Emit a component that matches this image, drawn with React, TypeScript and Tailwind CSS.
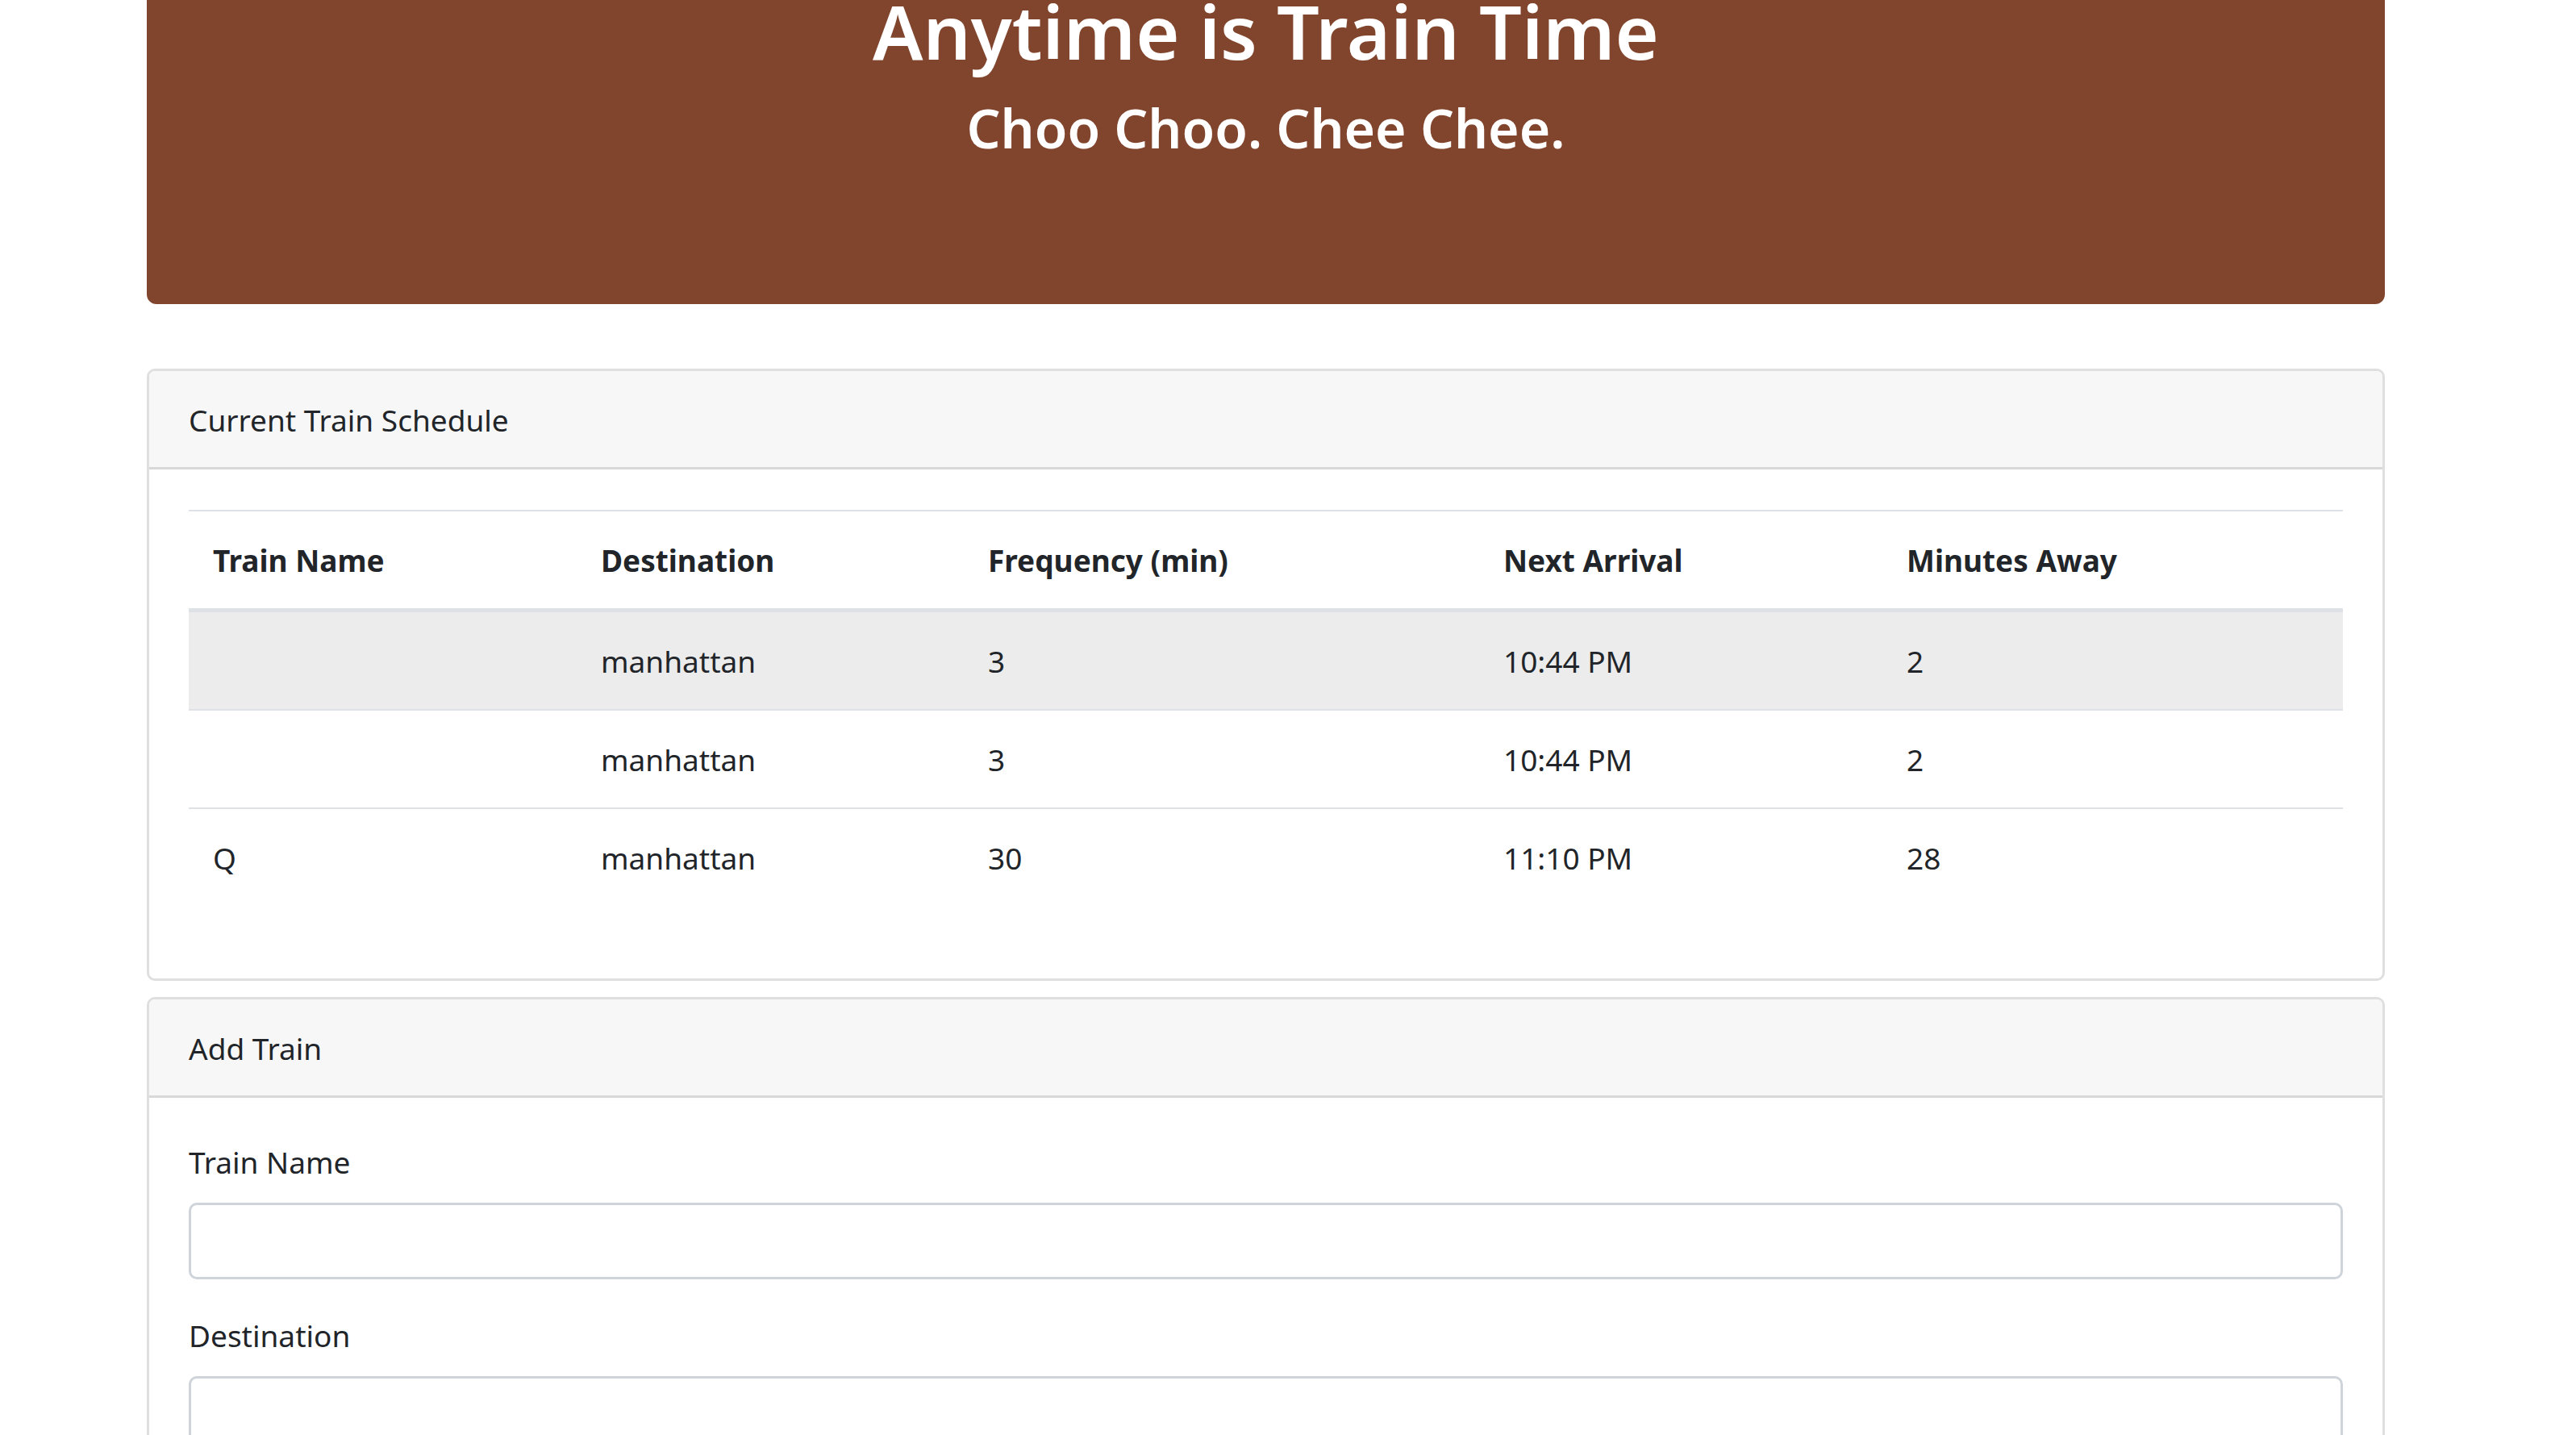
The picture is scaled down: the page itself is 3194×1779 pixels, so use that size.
import type { ReactNode } from 'react';

type Train = {
  name: string;
  destination: string;
  frequency: number;
  nextArrival: string;
  minutesAway: number;
};

const columns = [
  { label: 'Train Name', width: 'w-[481px]' },
  { label: 'Destination', width: 'w-[480px]' },
  { label: 'Frequency (min)', width: 'w-[639px]' },
  { label: 'Next Arrival', width: 'w-[500px]' },
  { label: 'Minutes Away', width: 'w-[571px]' },
];

const trains: Train[] = [
  { name: '', destination: 'manhattan', frequency: 3, nextArrival: '10:44 PM', minutesAway: 2 },
  { name: '', destination: 'manhattan', frequency: 3, nextArrival: '10:44 PM', minutesAway: 2 },
  { name: 'Q', destination: 'manhattan', frequency: 30, nextArrival: '11:10 PM', minutesAway: 28 },
];

function Card({ title, children }: { title: string; children: ReactNode }) {
  return (
    <section className="overflow-hidden rounded-[10px] border-[3px] border-[#dfdfdf] bg-white">
      <div className="border-b-[3px] border-[#d8d8d8] bg-[#f7f7f7] px-[49px] pt-[31px] pb-[28px]">{title}</div>
      <div className="px-[49px] py-[50px]">{children}</div>
    </section>
  );
}

function Field({ id, label }: { id: string; label: string }) {
  return (
    <div className="mb-[40px]">
      <label htmlFor={id} className="mb-[20px] block">
        {label}
      </label>
      <input
        id={id}
        type="text"
        className="block h-[95px] w-full rounded-[10px] border-[3px] border-[#ced4da] bg-white px-[30px] outline-none focus:border-[#80bdff]"
      />
    </div>
  );
}

function ScheduleTable() {
  return (
    <table className="mb-[40px] w-full table-fixed border-separate border-spacing-0 text-left">
      <thead>
        <tr>
          {columns.map((c) => (
            <th
              key={c.label}
              scope="col"
              className={`${c.width} border-t-2 border-b-[5px] border-[#dee2e6] px-[30px] pt-[31px] pb-[29px] font-bold`}
            >
              {c.label}
            </th>
          ))}
        </tr>
      </thead>
      <tbody>
        {trains.map((t, row) => (
          <tr key={row} className="group first:bg-[#ececec]">
            {[t.name, t.destination, t.frequency, t.nextArrival, t.minutesAway].map((value, col) => (
              <td
                key={col}
                className="border-t-2 border-[#dee2e6] px-[30px] pt-[31px] pb-[29px] group-first:border-t-0"
              >
                {value}
              </td>
            ))}
          </tr>
        ))}
      </tbody>
    </table>
  );
}

export default function App() {
  return (
    <div className="h-screen overflow-hidden bg-white pr-[55px] font-['Noto_Sans',sans-serif] text-[37px] leading-[60px] text-[#212529]">
      <main className="mx-auto max-w-[2775px]">
        <header className="mb-[80px] rounded-b-[12px] bg-[#80452c] pb-[177px] text-center font-semibold text-white">
          <h1 className="mb-[40px] text-[93px] leading-[76px]">Anytime is Train Time</h1>
          <h2 className="text-[66px] leading-[84px]">Choo Choo. Chee Chee.</h2>
        </header>
        <div className="flex flex-col gap-[20px]">
          <Card title="Current Train Schedule">
            <ScheduleTable />
          </Card>
          <Card title="Add Train">
            <form>
              <Field id="train-name" label="Train Name" />
              <Field id="destination" label="Destination" />
            </form>
          </Card>
        </div>
      </main>
    </div>
  );
}
